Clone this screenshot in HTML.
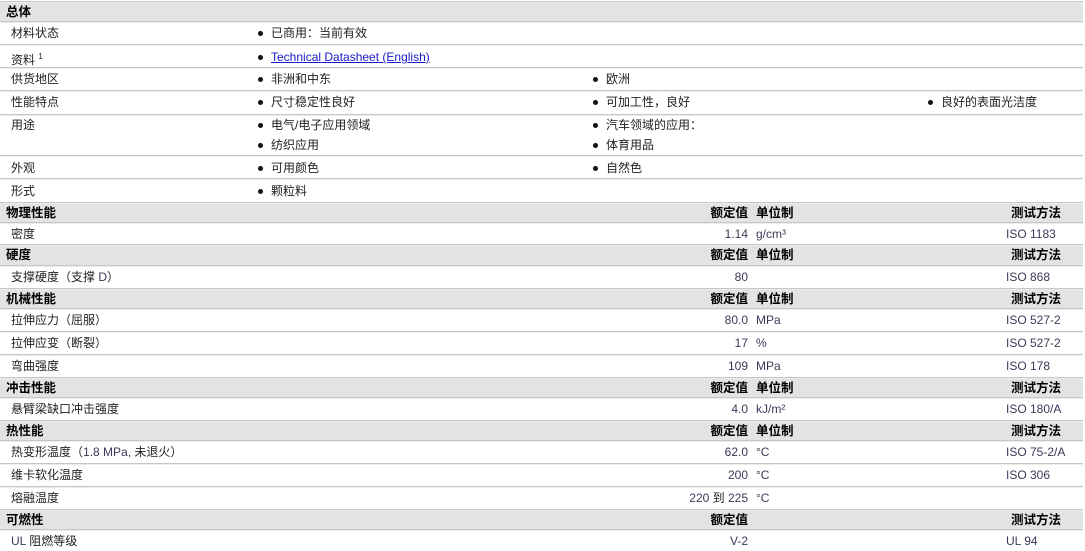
<!DOCTYPE html>
<html><head><meta charset="utf-8"><style>
body{margin:0;width:1085px;height:551px;background:#fff;overflow:hidden;font-family:"Liberation Sans","WenQuanYi Zen Hei","Noto Sans CJK SC",sans-serif;font-size:12px;color:#222;position:relative}
.r{position:absolute;left:0;width:1083px;box-sizing:border-box;border-top:1px solid #c6c6c6;box-shadow:inset 0 1px 0 #ececec}
.h{background:#e3e3e3;font-weight:bold;color:#000;font-size:12.5px}
.t{position:absolute;white-space:nowrap;line-height:14px}
.b::before{content:"";position:absolute;left:-13px;top:5px;width:5px;height:5px;border-radius:50%;background:#111}
.l{color:#3a3a58}
a{color:#1a1acc}
</style></head><body>
<div class="r h" style="top:1px;height:20px"><span class="t" style="left:6px;top:3px">总体</span></div>
<div class="r" style="top:21px;height:23px"><span class="t" style="left:11px;top:4px">材料状态</span><span class="t b" style="left:271px;top:4px">已商用：当前有效</span></div>
<div class="r" style="top:44px;height:23px"><span class="t" style="left:11px;top:5px">资料 <sup style="font-size:8px">1</sup></span><span class="t b" style="left:271px;top:5px"><a href="#">Technical Datasheet (English)</a></span></div>
<div class="r" style="top:67px;height:23px"><span class="t" style="left:11px;top:4px">供货地区</span><span class="t b" style="left:271px;top:4px">非洲和中东</span><span class="t b" style="left:606px;top:4px">欧洲</span></div>
<div class="r" style="top:90px;height:24px"><span class="t" style="left:11px;top:4px">性能特点</span><span class="t b" style="left:271px;top:4px">尺寸稳定性良好</span><span class="t b" style="left:606px;top:4px">可加工性，良好</span><span class="t b" style="left:941px;top:4px">良好的表面光洁度</span></div>
<div class="r" style="top:114px;height:41px"><span class="t" style="left:11px;top:3px">用途</span><span class="t b" style="left:271px;top:3px">电气/电子应用领域</span><span class="t b" style="left:606px;top:3px">汽车领域的应用：</span><span class="t b" style="left:271px;top:23px">纺织应用</span><span class="t b" style="left:606px;top:23px">体育用品</span></div>
<div class="r" style="top:155px;height:23px"><span class="t" style="left:11px;top:5px">外观</span><span class="t b" style="left:271px;top:5px">可用颜色</span><span class="t b" style="left:606px;top:5px">自然色</span></div>
<div class="r" style="top:178px;height:24px"><span class="t" style="left:11px;top:5px">形式</span><span class="t b" style="left:271px;top:5px">颗粒料</span></div>

<div class="r h" style="top:202px;height:20px"><span class="t" style="left:6px;top:3px">物理性能</span><span class="t" style="right:335px;top:3px">额定值</span><span class="t" style="left:756px;top:3px">单位制</span><span class="t" style="right:22px;top:3px">测试方法</span></div>
<div class="r" style="top:222px;height:22px"><span class="t" style="left:11px;top:4px">密度</span><span class="t l" style="right:335px;top:4px">1.14</span><span class="t l" style="left:756px;top:4px">g/cm³</span><span class="t l" style="left:1006px;top:4px">ISO 1183</span></div>
<div class="r h" style="top:244px;height:21px"><span class="t" style="left:6px;top:3px">硬度</span><span class="t" style="right:335px;top:3px">额定值</span><span class="t" style="left:756px;top:3px">单位制</span><span class="t" style="right:22px;top:3px">测试方法</span></div>
<div class="r" style="top:265px;height:23px"><span class="t" style="left:11px;top:4px">支撑硬度（支撑 <span class="l">D</span>）</span><span class="t l" style="right:335px;top:4px">80</span><span class="t l" style="left:1006px;top:4px">ISO 868</span></div>
<div class="r h" style="top:288px;height:20px"><span class="t" style="left:6px;top:3px">机械性能</span><span class="t" style="right:335px;top:3px">额定值</span><span class="t" style="left:756px;top:3px">单位制</span><span class="t" style="right:22px;top:3px">测试方法</span></div>
<div class="r" style="top:308px;height:23px"><span class="t" style="left:11px;top:4px">拉伸应力（屈服）</span><span class="t l" style="right:335px;top:4px">80.0</span><span class="t l" style="left:756px;top:4px">MPa</span><span class="t l" style="left:1006px;top:4px">ISO 527-2</span></div>
<div class="r" style="top:331px;height:23px"><span class="t" style="left:11px;top:4px">拉伸应变（断裂）</span><span class="t l" style="right:335px;top:4px">17</span><span class="t l" style="left:756px;top:4px">%</span><span class="t l" style="left:1006px;top:4px">ISO 527-2</span></div>
<div class="r" style="top:354px;height:23px"><span class="t" style="left:11px;top:4px">弯曲强度</span><span class="t l" style="right:335px;top:4px">109</span><span class="t l" style="left:756px;top:4px">MPa</span><span class="t l" style="left:1006px;top:4px">ISO 178</span></div>
<div class="r h" style="top:377px;height:20px"><span class="t" style="left:6px;top:3px">冲击性能</span><span class="t" style="right:335px;top:3px">额定值</span><span class="t" style="left:756px;top:3px">单位制</span><span class="t" style="right:22px;top:3px">测试方法</span></div>
<div class="r" style="top:397px;height:23px"><span class="t" style="left:11px;top:4px">悬臂梁缺口冲击强度</span><span class="t l" style="right:335px;top:4px">4.0</span><span class="t l" style="left:756px;top:4px">kJ/m²</span><span class="t l" style="left:1006px;top:4px">ISO 180/A</span></div>
<div class="r h" style="top:420px;height:20px"><span class="t" style="left:6px;top:3px">热性能</span><span class="t" style="right:335px;top:3px">额定值</span><span class="t" style="left:756px;top:3px">单位制</span><span class="t" style="right:22px;top:3px">测试方法</span></div>
<div class="r" style="top:440px;height:23px"><span class="t" style="left:11px;top:4px">热变形温度（<span class="l">1.8 MPa,</span> 未退火）</span><span class="t l" style="right:335px;top:4px">62.0</span><span class="t l" style="left:756px;top:4px">°C</span><span class="t l" style="left:1006px;top:4px">ISO 75-2/A</span></div>
<div class="r" style="top:463px;height:23px"><span class="t" style="left:11px;top:4px">维卡软化温度</span><span class="t l" style="right:335px;top:4px">200</span><span class="t l" style="left:756px;top:4px">°C</span><span class="t l" style="left:1006px;top:4px">ISO 306</span></div>
<div class="r" style="top:486px;height:23px"><span class="t" style="left:11px;top:4px">熔融温度</span><span class="t l" style="right:335px;top:4px">220 <span style="color:#222">到</span> 225</span><span class="t l" style="left:756px;top:4px">°C</span></div>
<div class="r h" style="top:509px;height:20px"><span class="t" style="left:6px;top:3px">可燃性</span><span class="t" style="right:335px;top:3px">额定值</span><span class="t" style="right:22px;top:3px">测试方法</span></div>
<div class="r" style="top:529px;height:22px"><span class="t" style="left:11px;top:4px"><span class="l">UL</span> 阻燃等级</span><span class="t l" style="right:335px;top:4px">V-2</span><span class="t l" style="left:1006px;top:4px">UL 94</span></div>
</body></html>
